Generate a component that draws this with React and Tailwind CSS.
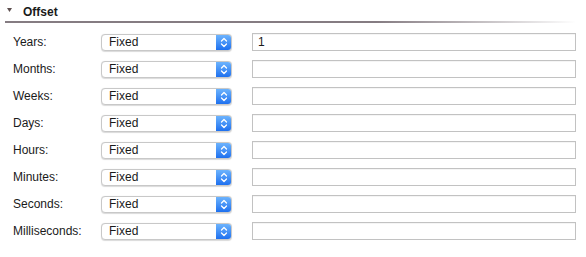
import React from 'react';

const rows = [
  { label: 'Years:', value: '1' },
  { label: 'Months:', value: '' },
  { label: 'Weeks:', value: '' },
  { label: 'Days:', value: '' },
  { label: 'Hours:', value: '' },
  { label: 'Minutes:', value: '' },
  { label: 'Seconds:', value: '' },
  { label: 'Milliseconds:', value: '' },
];

function Stepper() {
  return (
    <svg width="8" height="11" viewBox="0 0 8 11" fill="none">
      <path d="M1.5 4 L4 1.5 L6.5 4" stroke="white" strokeWidth="1.3" strokeLinecap="round" strokeLinejoin="round" />
      <path d="M1.5 7 L4 9.5 L6.5 7" stroke="white" strokeWidth="1.3" strokeLinecap="round" strokeLinejoin="round" />
    </svg>
  );
}

function Select() {
  return (
    <div className="flex w-[131px] h-[17px] rounded-[4px] border border-[#c8c8c8] bg-white shadow-[0_0.5px_1px_rgba(0,0,0,0.15)] overflow-hidden">
      <span className="flex-1 pl-[7px] text-[12px] leading-[15px] text-[#1a1a1a]">Fixed</span>
      <span className="w-[15px] flex items-center justify-center bg-linear-to-b from-[#6cb3fd] to-[#1d70ef]">
        <Stepper />
      </span>
    </div>
  );
}

export default function App() {
  return (
    <div className="w-[586px] h-[257px] bg-white text-[#1a1a1a]" style={{ fontFamily: '"Liberation Sans", Arial, sans-serif' }}>
      <div className="flex items-center h-[21px] pl-[7px] pt-[2px]">
        <svg width="5" height="4" viewBox="0 0 5 4" className="mb-[4px]">
          <path d="M0 0 H5 L2.5 4 Z" fill="#5e5050" />
        </svg>
        <span className="ml-[11px] text-[12px] font-bold">Offset</span>
      </div>
      <div className="ml-[5px] mr-[10px] h-[2px] bg-linear-to-r from-[#857c82] from-[65%] to-white" />
      <div className="flex flex-col gap-[9px] pt-[10px] pl-[13px]">
        {rows.map((r) => (
          <div key={r.label} className="flex items-center h-[18px]">
            <span className="w-[88px] text-[12px]">{r.label}</span>
            <Select />
            <div className="ml-[20px] w-[324px] h-[18px] border border-[#c2c2c2] bg-white shadow-[inset_0_1px_0_rgba(0,0,0,0.04)] pl-[5px] text-[12px] leading-[16px]">
              {r.value}
            </div>
          </div>
        ))}
      </div>
    </div>
  );
}
